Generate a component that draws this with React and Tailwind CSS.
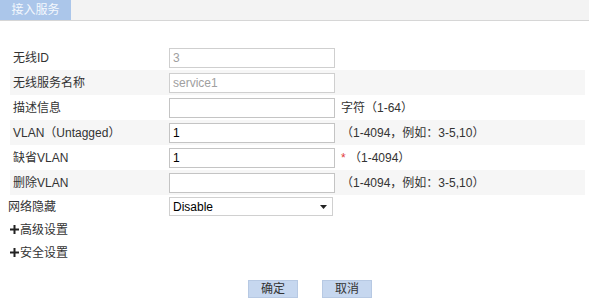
import React from "react";

const font = { fontFamily: '"Liberation Sans", "Noto Sans CJK SC", sans-serif' };

function Row({ label, gray, children }) {
  return (
    <div className={`flex h-[25px] items-center ${gray ? "bg-[#f6f6f6]" : ""}`}>
      <div className="w-[159px] pl-[3px] text-[12px] text-[#333]">{label}</div>
      {children}
    </div>
  );
}

function Input({ value = "", disabled }) {
  return (
    <div
      className={`flex h-[20px] w-[166px] items-center border bg-white pl-[3px] text-[12px] ${
        disabled ? "border-[#cfcfcf] text-[#a0a0a0]" : "border-[#c4c4c4] text-[#000]"
      }`}
    >
      {value}
    </div>
  );
}

function Hint({ children }) {
  return <div className="ml-[6px] text-[12px] text-[#333]">{children}</div>;
}

function Plus() {
  return (
    <svg width="9" height="9" viewBox="0 0 9 9" className="mr-[1px]">
      <rect x="0" y="3.5" width="9" height="2" fill="#222" />
      <rect x="3.5" y="0" width="2" height="9" fill="#222" />
    </svg>
  );
}

export default function App() {
  return (
    <div className="h-[300px] w-[589px] bg-white" style={font}>
      <div className="flex h-[21px] border-b border-[#d6d6d6] bg-[#f3f3f3]">
        <div className="flex h-[20px] w-[71px] items-center justify-center bg-[#abc6ea] text-[12px] text-[#f4f8fd]">
          接入服务
        </div>
      </div>
      <div className="ml-[10px] mr-[4px] mt-[24px]">
        <Row label="无线ID">
          <Input value="3" disabled />
        </Row>
        <Row label="无线服务名称" gray>
          <Input value="service1" disabled />
        </Row>
        <Row label="描述信息">
          <Input />
          <Hint>字符（1-64）</Hint>
        </Row>
        <Row label="VLAN（Untagged）" gray>
          <Input value="1" />
          <Hint>（1-4094，例如：3-5,10）</Hint>
        </Row>
        <Row label="缺省VLAN">
          <Input value="1" />
          <Hint>
            <span className="text-[#e23b3b]">*</span> （1-4094）
          </Hint>
        </Row>
        <Row label="删除VLAN" gray>
          <Input />
          <Hint>（1-4094，例如：3-5,10）</Hint>
        </Row>
      </div>
      <div className="ml-[8px] flex h-[23px] items-center">
        <div className="w-[161px] text-[12px] text-[#333]">网络隐藏</div>
        <div className="flex h-[19px] w-[164px] items-center justify-between border border-[#d0d0d0] bg-white pl-[3px] pr-[5px] text-[12px] text-black">
          <span>Disable</span>
          <svg width="7" height="4" viewBox="0 0 7 4">
            <path d="M0 0H7L3.5 4Z" fill="#222" />
          </svg>
        </div>
      </div>
      <div className="ml-[10px] flex h-[23px] items-center text-[12px] text-[#333]">
        <Plus />
        高级设置
      </div>
      <div className="ml-[10px] flex h-[23px] items-center text-[12px] text-[#333]">
        <Plus />
        安全设置
      </div>
      <div className="ml-[248px] mt-[16px] flex gap-[24px]">
        <div className="flex h-[18px] w-[50px] items-center justify-center border border-[#b7c9e3] bg-[#c6d7ef] text-[12px] text-[#333]">
          确定
        </div>
        <div className="flex h-[18px] w-[50px] items-center justify-center border border-[#b7c9e3] bg-[#c6d7ef] text-[12px] text-[#333]">
          取消
        </div>
      </div>
    </div>
  );
}
